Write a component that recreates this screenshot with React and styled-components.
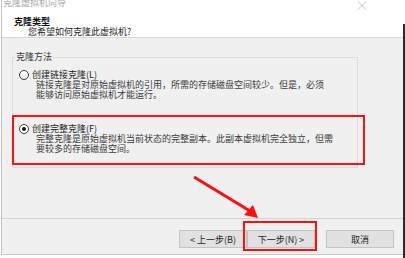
import styled, { createGlobalStyle } from "styled-components";

const Global = createGlobalStyle`
  html, body {
    margin: 0;
    padding: 0;
    background: #ffffff;
    overflow: hidden;
  }
  body {
    font-family: "Noto Sans CJK SC", "Liberation Sans", sans-serif;
  }
`;

const Screen = styled.div`
  position: relative;
  width: 405px;
  height: 258px;
  display: flex;
  background: #ffffff;
`;

const Wizard = styled.div`
  width: 401px;
  margin-left: 1px;
  border-left: 1px solid #c4c4c4;
  display: flex;
  flex-direction: column;
  height: 254px;
  border-bottom: 1px solid #c9c9c9;
`;

const DarkEdge = styled.div`
  width: 2px;
  margin-top: 24px;
  background: #2a2a2a;
`;

const TitleBar = styled.div`
  height: 11px;
  flex-shrink: 0;
  display: flex;
  justify-content: space-between;
  align-items: flex-start;
  overflow: hidden;
  background: #ffffff;
`;

const TitleText = styled.span`
  margin-top: -3px;
  margin-left: 1px;
  font-size: 9px;
  line-height: 12px;
  color: #a8a8a8;
`;

const CloseIcon = styled.svg`
  margin-right: 36px;
  margin-top: 1px;
`;

const Header = styled.div`
  height: 27px;
  flex-shrink: 0;
  background: #ffffff;
  border-bottom: 1px solid #d6d6d6;
  display: flex;
  flex-direction: column;
  padding-left: 12px;
  padding-top: 6px;
  box-sizing: border-box;
`;

const HeaderTitle = styled.div`
  font-size: 9px;
  line-height: 10px;
  font-weight: 700;
  color: #111;
`;

const HeaderSub = styled.div`
  font-size: 9px;
  line-height: 10px;
  color: #222;
  padding-left: 14px;
`;

const Body = styled.div`
  flex: 1;
  background: #f0f0f0;
  padding: 14px 45px 0 10px;
`;

const Group = styled.fieldset`
  margin: 0;
  padding: 0;
  height: 116px;
  box-sizing: border-box;
  border: 1px solid #dcdcdc;
`;

const Legend = styled.legend`
  font-size: 9px;
  line-height: 10px;
  color: #333;
  padding: 0 1px;
  margin-left: 2px;
`;

const OptionList = styled.div`
  display: flex;
  flex-direction: column;
  gap: 24px;
  padding: 8px 0 0 6px;
`;

const Option = styled.div`
  display: flex;
  flex-direction: column;
`;

const OptionLabel = styled.div`
  display: flex;
  align-items: center;
  gap: 3px;
  height: 10px;
  font-size: 9px;
  line-height: 10px;
  color: #222;
`;

const Radio = styled.span`
  width: 8px;
  height: 8px;
  flex-shrink: 0;
  border-radius: 50%;
  border: 1px solid #3a3a3a;
  background: #ffffff;
  display: flex;
  align-items: center;
  justify-content: center;
  &::after {
    content: "";
    width: 4px;
    height: 4px;
    border-radius: 50%;
    background: ${(p) => (p.checked ? "#1a1a1a" : "transparent")};
  }
`;

const Desc = styled.div`
  padding-left: 17px;
  height: 10px;
  font-size: 9px;
  line-height: 10px;
  color: #3a3a3a;
`;

const Footer = styled.div`
  height: 36px;
  flex-shrink: 0;
  background: #f0f0f0;
  border-top: 1px solid #d2d2d2;
  display: flex;
  justify-content: flex-end;
  align-items: flex-start;
  padding: 11px 9px 0 0;
  box-sizing: border-box;
`;

const Button = styled.button`
  width: ${(p) => p.w || 68}px;
  height: 18px;
  margin-left: ${(p) => p.gap || 0}px;
  padding: 0;
  background: #e1e1e1;
  border: 1px solid #c3c3c3;
  font-family: "Noto Sans CJK SC", "Liberation Sans", sans-serif;
  font-size: 9px;
  color: #222;
`;

const Mark = styled.div`
  position: absolute;
  border: 2px solid #ff1010;
  box-sizing: border-box;
`;

const Arrow = styled.svg`
  position: absolute;
  left: 0;
  top: 0;
  pointer-events: none;
`;

export default function App() {
  return (
    <>
      <Global />
      <Screen>
        <Wizard>
          <TitleBar>
            <TitleText>克隆虚拟机向导</TitleText>
            <CloseIcon width="10" height="9" viewBox="0 0 10 9">
              <path d="M1 0.5 L9 8.5 M9 0.5 L1 8.5" stroke="#b0b0b0" strokeWidth="0.8" />
            </CloseIcon>
          </TitleBar>
          <Header>
            <HeaderTitle>克隆类型</HeaderTitle>
            <HeaderSub>您希望如何克隆此虚拟机?</HeaderSub>
          </Header>
          <Body>
            <Group>
              <Legend>克隆方法</Legend>
              <OptionList>
                <Option>
                  <OptionLabel>
                    <Radio />
                    创建链接克隆(L)
                  </OptionLabel>
                  <Desc>链接克隆是对原始虚拟机的引用，所需的存储磁盘空间较少。但是，必须</Desc>
                  <Desc>能够访问原始虚拟机才能运行。</Desc>
                </Option>
                <Option>
                  <OptionLabel>
                    <Radio checked />
                    创建完整克隆(F)
                  </OptionLabel>
                  <Desc>完整克隆是原始虚拟机当前状态的完整副本。此副本虚拟机完全独立，但需</Desc>
                  <Desc>要较多的存储磁盘空间。</Desc>
                </Option>
              </OptionList>
            </Group>
          </Body>
          <Footer>
            <Button w={68}>&lt; 上一步(B)</Button>
            <Button w={68}>下一步(N) &gt;</Button>
            <Button w={68} gap={11}>取消</Button>
          </Footer>
        </Wizard>
        <DarkEdge />
        <Mark style={{ left: 12, top: 115, width: 353, height: 50 }} />
        <Mark style={{ left: 243, top: 221, width: 74, height: 30 }} />
        <Arrow width="405" height="258" viewBox="0 0 405 258">
          <line x1="194" y1="177" x2="250" y2="211" stroke="#ff1010" strokeWidth="3" />
          <polygon points="258,218 244,215 253,205" fill="#ff1010" />
        </Arrow>
      </Screen>
    </>
  );
}
